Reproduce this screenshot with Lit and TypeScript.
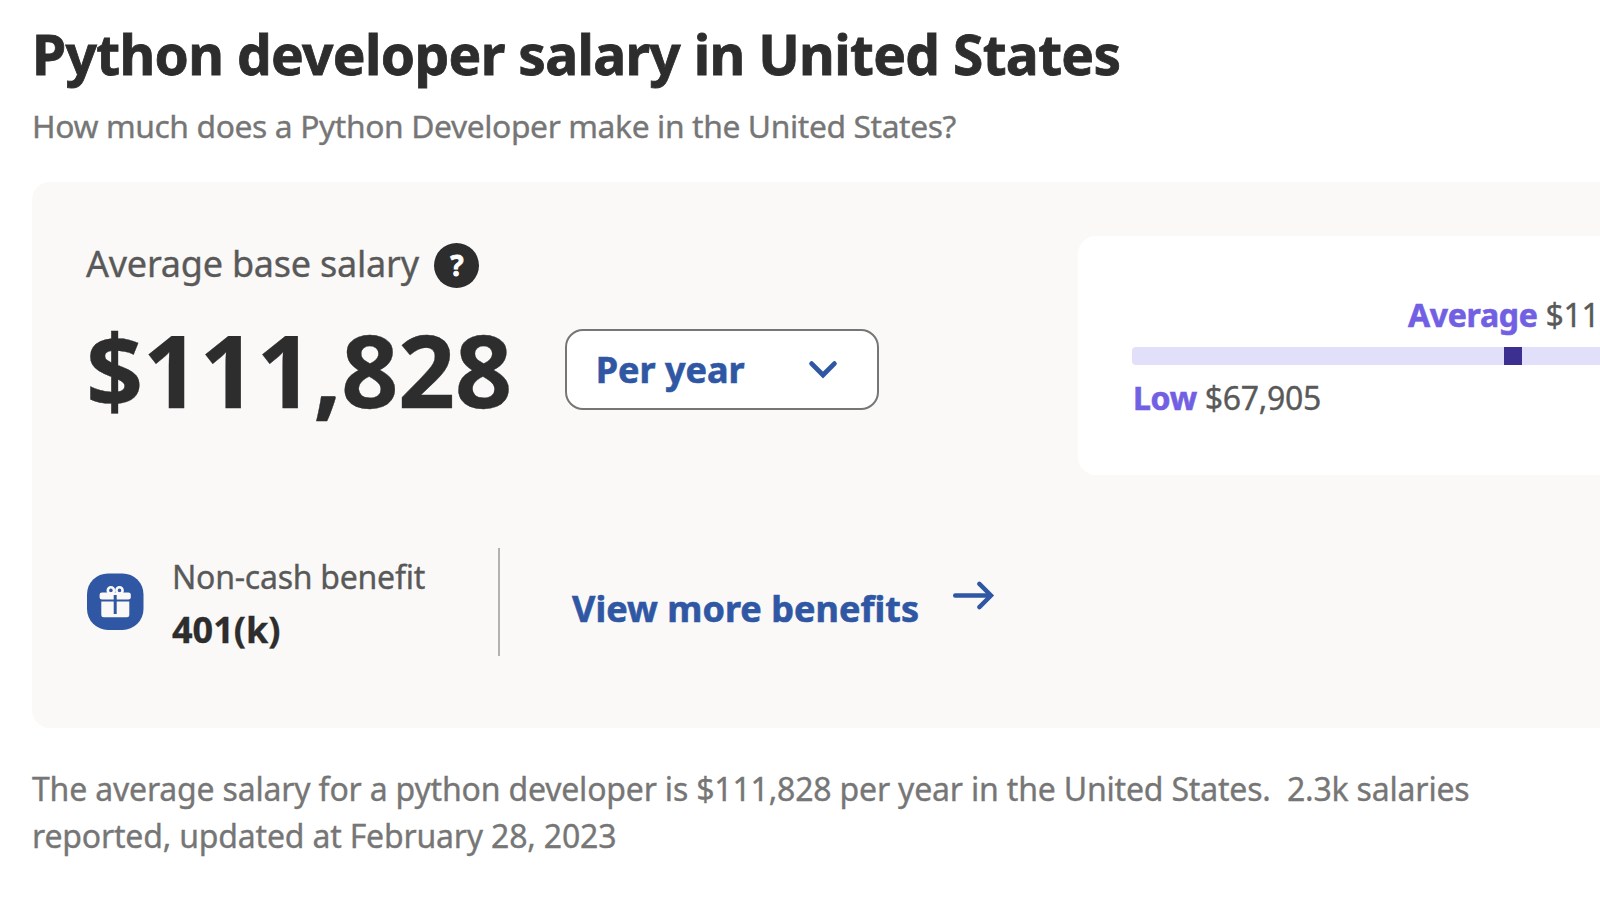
import { LitElement, html, css } from "lit";
import { customElement } from "lit/decorators.js";

@customElement("app-root")
export class AppRoot extends LitElement {
  static styles = css`
    :host {
      display: block;
      width: 100%;
      height: 900px;
      overflow: hidden;
      background: #fff;
      color: #2d2d2d;
      font-family: "Noto Sans", "Open Sans", sans-serif;
      -webkit-text-stroke: 0.35px currentColor;
    }
    * { box-sizing: border-box; }
    .page { padding: 17px 0 0 32px; }
    h1, p { margin: 0; white-space: nowrap; }
    h1 { font-size: 55px; line-height: 73px; font-weight: 700; letter-spacing: -0.67px; -webkit-text-stroke-width: 0.8px; }
    .subtitle { margin-top: 12px; font-size: 31.8px; line-height: 47px; color: #767676; letter-spacing: -0.385px; }
    .panel {
      display: flex;
      align-items: flex-start;
      margin-top: 33px;
      height: 546px;
      padding: 54px 0 0 54px;
      border-radius: 18px 0 0 18px;
      background: #faf9f8;
    }
    .main { flex: none; width: 992px; }
    .label { display: flex; align-items: center; gap: 15.5px; height: 54px; font-size: 36px; line-height: 54px; color: #595959; white-space: nowrap; letter-spacing: -0.23px; }
    .label span:first-child { padding-top: 2px; }
    .help { flex: none; width: 45px; height: 45px; margin-top: 5px; border-radius: 50%; background: #2d2d2d; color: #fff; font-size: 28px; line-height: 45px; font-weight: 700; text-align: center; -webkit-text-stroke-width: 0.8px; }
    .pay { display: flex; align-items: center; gap: 53px; margin-top: 19px; height: 120px; }
    .amount { font-size: 100px; line-height: 120px; font-weight: 700; letter-spacing: -0.4px; }
    .select {
      display: flex;
      align-items: center;
      justify-content: space-between;
      width: 314px;
      height: 81px;
      padding: 2px 39px 0 29px;
      border: 2px solid #767676;
      border-radius: 18px;
      background: #fff;
      color: #2f57a4;
      font: inherit;
      font-size: 36px;
      line-height: 54px;
      font-weight: 700;
      -webkit-text-stroke-width: 0.6px;
    }
    svg { display: block; flex: none; }
    .benefits { display: flex; margin-top: 119px; height: 108px; }
    .gift { margin: 25px 0 0 1px; }
    .benefit { width: 326px; margin-left: 28px; padding-top: 5px; white-space: nowrap; }
    .name { font-size: 32px; line-height: 48px; color: #595959; letter-spacing: -0.24px; }
    .value { margin-top: 2px; font-size: 36px; line-height: 54px; font-weight: 700; }
    .divider { width: 2px; height: 108px; background: #b4b2b1; }
    .more { display: flex; margin-left: 72px; padding-top: 33px; color: #2f57a4; font-size: 36px; line-height: 56px; font-weight: 700; white-space: nowrap; text-decoration: none; letter-spacing: 0.03px; -webkit-text-stroke-width: 0.6px; }
    .arrow { margin-left: 34px; }
    .range { flex: 1; min-width: 0; height: 239px; padding: 61px 0 0 54px; border-radius: 18px 0 0 18px; background: #fff; overflow: hidden; font-size: 32px; line-height: 36px; color: #595959; white-space: nowrap; letter-spacing: -0.3px; }
    .range b { color: #7160e3; -webkit-text-stroke-width: 0.6px; }
    .avg { margin-left: 276px; }
    .low { margin-left: 1px; }
    .bar { display: flex; height: 18px; margin: 14px 0 15px; border-radius: 4px 0 0 4px; background: #e2dffb; }
    .mark { width: 18px; margin-left: 372px; background: #3c2f92; }
    .summary { margin-top: 37px; font-size: 32px; line-height: 47px; color: #767676; letter-spacing: -0.187px; }
  `;

  render() {
    return html`
      <main class="page">
        <h1>Python developer salary in United States</h1>
        <p class="subtitle">How much does a Python Developer make in the United States?</p>
        <section class="panel">
          <div class="main">
            <div class="label"><span>Average base salary</span><span class="help">?</span></div>
            <div class="pay">
              <span class="amount">$111,828</span>
              <button class="select"><span>Per year</span>
                <svg width="30" height="20" viewBox="0 0 30 20" fill="none" stroke="#2f57a4" stroke-width="4.8"><path d="M3.6 3.6 15 15 26.4 3.6" stroke-linecap="round" /></svg>
              </button>
            </div>
            <div class="benefits">
              <svg class="gift" width="57" height="57" viewBox="0 0 57 57">
                <rect y="0.4" width="56.5" height="56.5" rx="21" fill="#2f57a4" />
                <g fill="#faf9f8">
                  <rect x="12.6" y="19.4" width="31.2" height="7.2" rx="2.4" />
                  <path d="M14.3 28.6h28v13.4q0 2.3-2.3 2.3H16.6q-2.3 0-2.3-2.3z" />
                </g>
                <g fill="none" stroke="#faf9f8" stroke-width="2.6"><circle cx="23.9" cy="17.4" r="3.1" /><circle cx="32.5" cy="17.4" r="3.1" /></g>
                <path d="M28.2 22v19" stroke="#2f57a4" stroke-width="3" />
              </svg>
              <div class="benefit"><div class="name">Non-cash benefit</div><div class="value">401(k)</div></div>
              <div class="divider"></div>
              <a class="more"><span>View more benefits</span>
                <svg class="arrow" width="42" height="29" viewBox="0 0 42 29" fill="none" stroke="#2f57a4" stroke-width="4.4"><path d="M2.2 14.5H37" stroke-linecap="round" /><path d="M26.4 2.9 38 14.5 26.4 26.1" stroke-linecap="round" /></svg>
              </a>
            </div>
          </div>
          <div class="range">
            <div class="avg"><b>Average</b> $111,828</div>
            <div class="bar"><div class="mark"></div></div>
            <div class="low"><b>Low</b> $67,905</div>
          </div>
        </section>
        <p class="summary">The average salary for a python developer is $111,828 per year in the United States.&nbsp; 2.3k salaries<br />reported, updated at February 28, 2023</p>
      </main>
    `;
  }
}
